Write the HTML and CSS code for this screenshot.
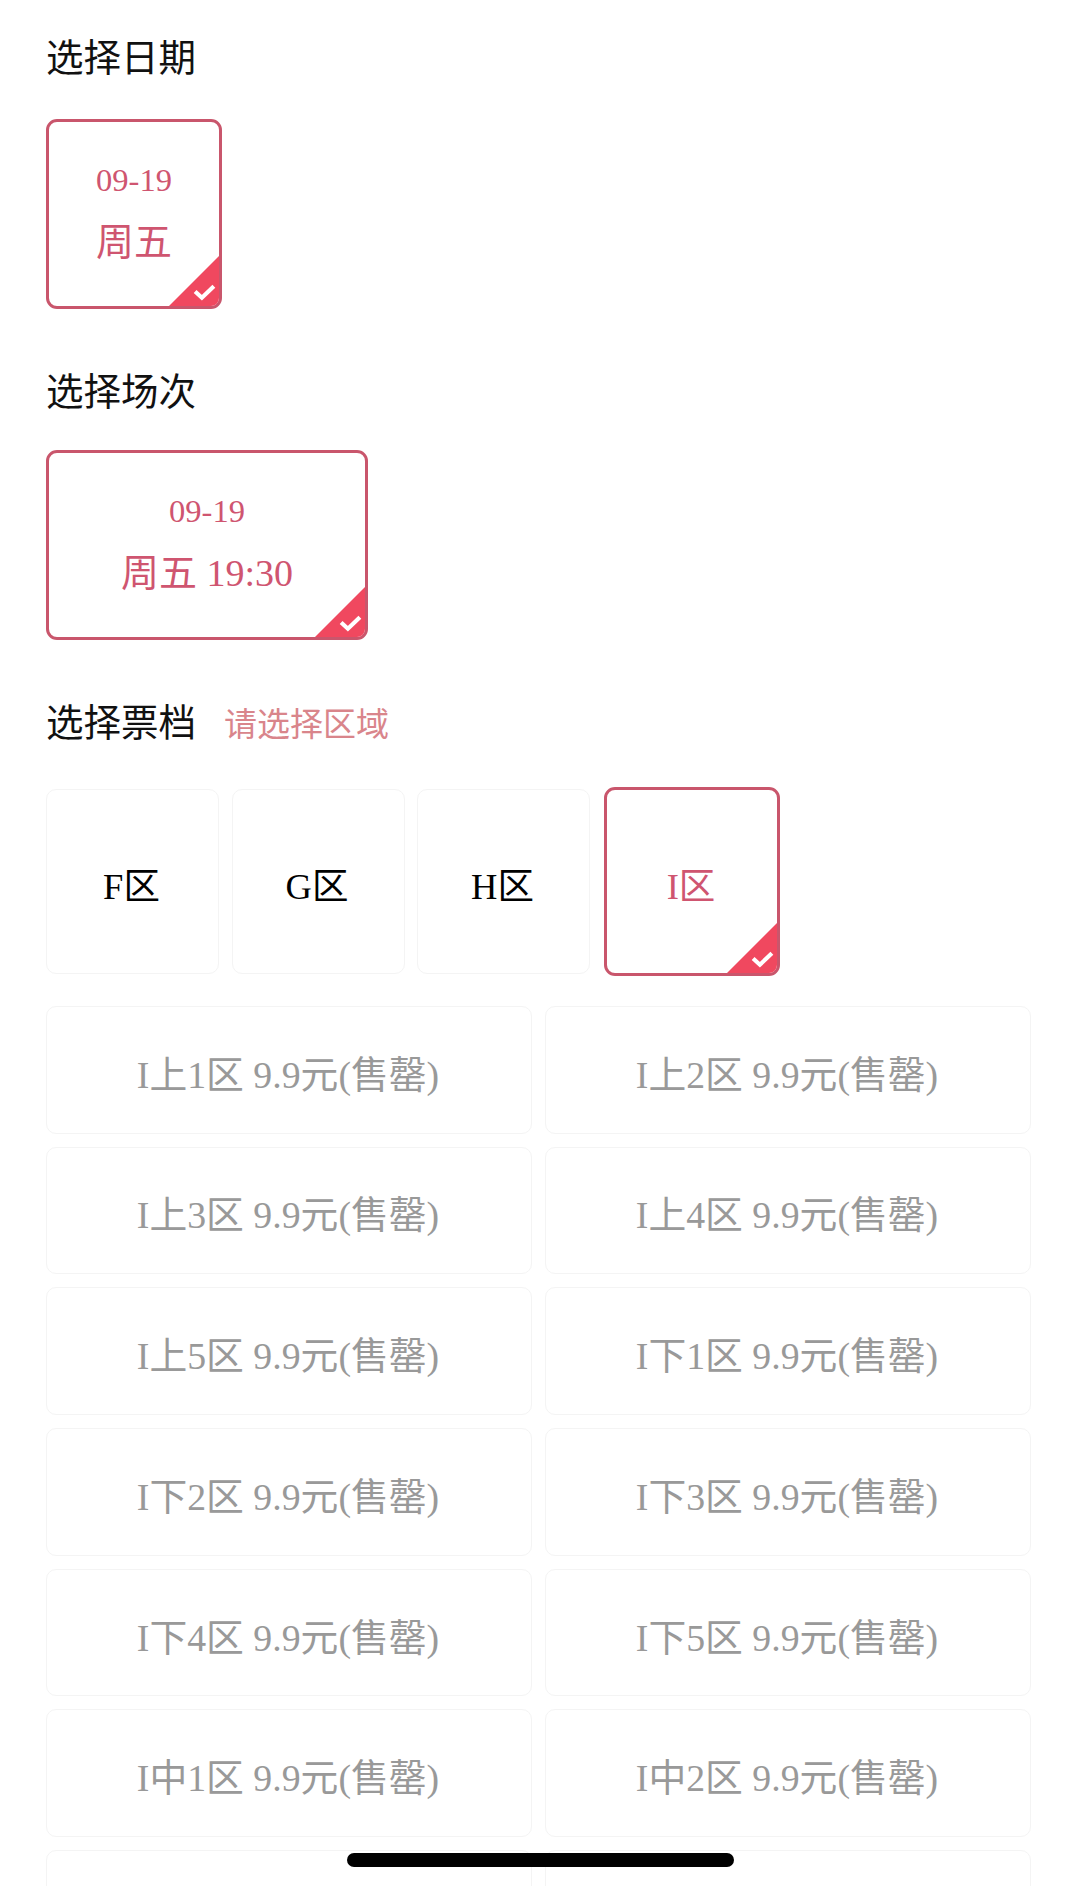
FILE: index.html
```html
<!DOCTYPE html>
<html lang="zh-CN">
<head>
  <meta charset="UTF-8" />
  <meta name="viewport" content="width=device-width, initial-scale=1.0"/>
  <title>选择票档</title>
  <link rel="stylesheet" href="styles.css">
</head>
<body>

<div class="page">
  <h2 class="title title-date">选择日期</h2>
  <div class="card card-date active">
    <div class="card-sub">09-19</div>
    <div class="card-main">周五</div>
    <span class="corner"><svg viewBox="0 0 24 18"><path d="M3 9l6.5 6L21 4"/></svg></span>
  </div>

  <h2 class="title title-session">选择场次</h2>
  <div class="card card-session active">
    <div class="card-sub">09-19</div>
    <div class="card-main">周五 19:30</div>
    <span class="corner"><svg viewBox="0 0 24 18"><path d="M3 9l6.5 6L21 4"/></svg></span>
  </div>

  <h2 class="title title-ticket">选择票档<span class="hint">请选择区域</span></h2>
  <div class="zones">
    <div class="zone">F区</div>
    <div class="zone">G区</div>
    <div class="zone">H区</div>
    <div class="zone active">I区
      <span class="corner"><svg viewBox="0 0 24 18"><path d="M3 9l6.5 6L21 4"/></svg></span>
    </div>
  </div>

  <div class="seats">
    <div class="seat">I上1区 9.9元(售罄)</div>
    <div class="seat">I上2区 9.9元(售罄)</div>
    <div class="seat">I上3区 9.9元(售罄)</div>
    <div class="seat">I上4区 9.9元(售罄)</div>
    <div class="seat">I上5区 9.9元(售罄)</div>
    <div class="seat">I下1区 9.9元(售罄)</div>
    <div class="seat">I下2区 9.9元(售罄)</div>
    <div class="seat">I下3区 9.9元(售罄)</div>
    <div class="seat">I下4区 9.9元(售罄)</div>
    <div class="seat">I下5区 9.9元(售罄)</div>
    <div class="seat">I中1区 9.9元(售罄)</div>
    <div class="seat">I中2区 9.9元(售罄)</div>
    <div class="seat"></div>
    <div class="seat"></div>
  </div>
</div>

<div class="home-bar"></div>

</body>
</html>
```

FILE: styles.css
```css
* {
  margin: 0;
  padding: 0;
  box-sizing: border-box;
}

html, body {
  height: 1886px;
  overflow: hidden;
  background: #fff;
}

body {
  position: relative;
  font-family: "Liberation Serif", "Noto Sans CJK SC", serif;
  color: #000;
}

.page {
  padding: 0 49px 0 46px;
}

.title {
  font-family: "Noto Sans CJK SC", sans-serif;
  font-weight: 400;
  font-size: 37.5px;
  line-height: 50px;
  color: #111;
}

.title-date { padding-top: 30px; margin-bottom: 39px; }
.title-session { margin-top: 55px; margin-bottom: 36px; }
.title-ticket { margin-top: 55px; margin-bottom: 40px; }

.hint {
  margin-left: 28px;
  font-size: 33px;
  color: #d9858b;
}

.card {
  position: relative;
  display: flex;
  flex-direction: column;
  align-items: center;
  justify-content: center;
  height: 190px;
  background: #fff;
  text-align: center;
  color: #cf5570;
}

.card-date { width: 176px; }
.card-session { width: 322px; }

.card-sub {
  font-size: 32.5px;
  line-height: 44px;
  margin-bottom: 16px;
  margin-top: -5px;
}

.card-main {
  font-size: 38px;
  line-height: 48px;
}

.active {
  border: 3px solid #c9566c;
  border-radius: 11px;
  overflow: hidden;
}

.corner {
  position: absolute;
  right: 0;
  bottom: 0;
  width: 50px;
  height: 50px;
  background: #f0485f;
  clip-path: polygon(100% 0, 100% 100%, 0 100%);
}

.corner svg {
  position: absolute;
  right: 2px;
  bottom: 5px;
  width: 25px;
  height: 19px;
  fill: none;
  stroke: #fff;
  stroke-width: 4;
}

.zones {
  display: flex;
  gap: 12.5px;
  align-items: center;
}

.zone {
  position: relative;
  display: flex;
  align-items: center;
  justify-content: center;
  width: 173px;
  height: 185px;
  font-size: 36.5px;
  border: 1px solid #f4f4f4;
  border-radius: 10px;
  background: #fff;
  padding-top: 4px;
  padding-right: 2px;
}

.zone.active {
  width: 176px;
  height: 189px;
  margin-left: 1.5px;
  border: 3px solid #c9566c;
  border-radius: 11px;
  color: #cf5570;
}

.seats {
  display: grid;
  grid-template-columns: 1fr 1fr;
  grid-auto-rows: 127.5px;
  gap: 13.2px 13px;
  margin-top: 30px;
}

.seat {
  display: flex;
  align-items: center;
  justify-content: center;
  font-size: 37.8px;
  color: #999;
  border: 1px solid #f4f4f4;
  border-radius: 10px;
  background: #fff;
  white-space: pre;
  padding-top: 3px;
  padding-right: 2px;
}

.home-bar {
  position: absolute;
  left: 347px;
  top: 1853px;
  width: 387px;
  height: 14px;
  border-radius: 7px;
  background: #000;
}
```
